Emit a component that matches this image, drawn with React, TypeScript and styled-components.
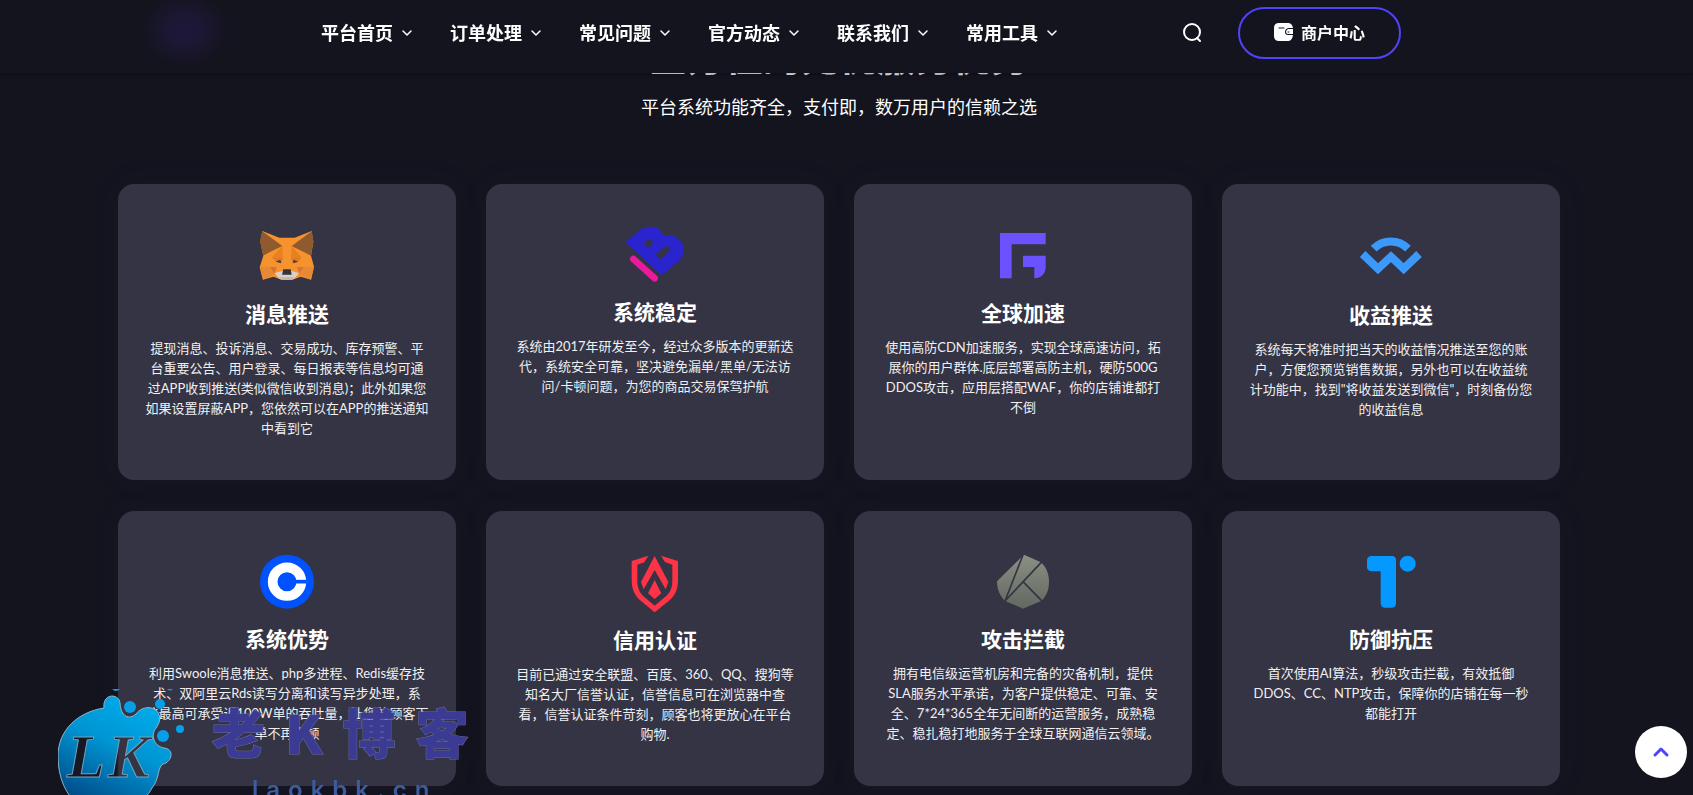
import React from "react";
import styled, { createGlobalStyle } from "styled-components";

const GlobalStyle = createGlobalStyle`
  * { box-sizing: border-box; }
  html { background: #14141f; }
  body {
    margin: 0;
    background: #14141f;
    color: #fff;
    font-family: Lato, "Noto Sans CJK SC", sans-serif;
    overflow: hidden;
  }
  h2, h3, p { margin: 0; }
`;

const Page = styled.div`
  height: 100vh;
  overflow: hidden;
`;

const Header = styled.header`
  position: fixed;
  inset: 0 0 auto 0;
  z-index: 10;
  padding: 0 15px 0 0;
  background: #14141f;
  box-shadow: 0 2px 4px rgba(0, 0, 0, 0.35);
`;

const HeaderInner = styled.div`
  display: flex;
  align-items: center;
  max-width: 1442px;
  min-height: 73px;
  margin: 0 auto;
  padding-bottom: 8px;
`;

const Logo = styled.a`
  flex: none;
  width: 134px;
  height: 65px;
  background: radial-gradient(ellipse 42px 36px at 50% 46%, #1e173c 0%, #1c1734 40%, #14141f 100%);
`;

const Nav = styled.nav`
  display: flex;
  gap: 37px;
  margin-left: 69px;
`;

const NavLink = styled.a`
  display: flex;
  align-items: center;
  gap: 8px;
  color: #fff;
  font-size: 18px;
  line-height: 28px;
  font-weight: 700;
  text-decoration: none;
  white-space: nowrap;
`;

const Actions = styled.div`
  display: flex;
  align-items: center;
  gap: 36px;
  margin: 0 159px 0 auto;
`;

const SearchButton = styled.button`
  display: flex;
  padding: 0;
  border: 0;
  background: none;
  color: #fff;
  cursor: pointer;
`;

const MerchantButton = styled.button`
  display: flex;
  align-items: center;
  gap: 8px;
  padding: 12px 34px;
  border: 2px solid #5142fc;
  border-radius: 26px;
  background: none;
  color: #fff;
  font: inherit;
  font-size: 16px;
  line-height: 24px;
  font-weight: 700;
  cursor: pointer;
`;

const Section = styled.main`
  padding: 28px 15px 0 0;
`;

const SectionInner = styled.div`
  max-width: 1442px;
  margin: 0 auto;
`;

const SectionTitle = styled.h2`
  font-size: 38px;
  line-height: 56px;
  font-weight: 700;
  text-align: center;
`;

const SectionLead = styled.p`
  margin-top: 9px;
  font-size: 18px;
  line-height: 28px;
  text-align: center;
`;

const Cards = styled.div`
  display: grid;
  grid-template-columns: repeat(4, 1fr);
  gap: 31px 30px;
  margin-top: 63px;
`;

const Card = styled.article`
  display: flex;
  flex-direction: column;
  align-items: center;
  padding: 43px 16px 42px;
  border-radius: 16px;
  background: #343444;
  box-shadow: 0 0 24px rgba(40, 40, 70, 0.2);
  text-align: center;
`;

const CardIcon = styled.svg`
  flex: none;
  width: 64px;
  overflow: visible;
`;

const CardTitle = styled.h3`
  margin-top: 15px;
  font-size: 21px;
  line-height: 32px;
  font-weight: 700;
`;

const CardText = styled.p`
  margin-top: 8px;
  color: #f0f0f2;
  font-size: 13px;
  line-height: 20px;
  white-space: pre-line;
`;

const TopButton = styled.button`
  position: fixed;
  right: 6px;
  bottom: 17px;
  z-index: 12;
  display: flex;
  align-items: center;
  justify-content: center;
  width: 52px;
  height: 52px;
  padding: 0;
  border: 0;
  border-radius: 50%;
  background: #fff;
  cursor: pointer;
`;

const Watermark = styled.div`
  position: fixed;
  left: 58px;
  bottom: 0;
  z-index: 11;
  display: flex;
  height: 108px;
  overflow: hidden;
  pointer-events: none;
`;

const WatermarkLogo = styled.svg`
  flex: none;
  width: 134px;
  height: 108px;
`;

const WatermarkText = styled.div`
  display: flex;
  flex-direction: column;
  margin-left: 20px;
`;

const SiteName = styled.div`
  display: flex;
  gap: 20px;
  margin-top: 10px;
  color: #3b3b93;
  font-family: "Noto Sans CJK SC", sans-serif;
  font-size: 53px;
  line-height: 68px;
  font-weight: 900;
  -webkit-text-stroke: 1px #6a6aa8;
  paint-order: stroke fill;
`;

const SiteAddress = styled.div`
  display: flex;
  gap: 8px;
  margin: 10px 0 0 40px;
  color: #3e5c9e;
  font-family: Inter, sans-serif;
  font-size: 24px;
  line-height: 30px;
  font-weight: 600;
`;

const NAV_ITEMS = ["平台首页", "订单处理", "常见问题", "官方动态", "联系我们", "常用工具"];

interface Feature {
  title: string;
  text: string;
  height: number;
  viewBox: string;
  art: React.ReactNode;
}

const FEATURES: Feature[] = [
  {
    title: "消息推送",
    text: "提现消息、投诉消息、交易成功、库存预警、平\n台重要公告、用户登录、每日报表等信息均可通\n过APP收到推送(类似微信收到消息)；此外如果您\n如果设置屏蔽APP，您依然可以在APP的推送通知\n中看到它",
    height: 56,
    viewBox: "435 171 192 168",
    art: (
      <>
        <path fill="#f6932f" d="M457 183 508 203H554L605 183 610 215 603 257 612 290 603 329 572 320 547 329H515L490 320 459 329 449 292 460 257 451 215Z" />
        <path fill="#8f5b2e" d="M457 184 517 228 486 243 459 257 450 213ZM605 184 545 228 575 243 603 257 610 213Z" />
        <path fill="#e9811c" d="M517 228 519 265 486 262ZM545 228 543 265 575 262Z" />
        <path fill="#de7a2a" d="M486 262 519 265 512 280 496 272ZM575 262 543 265 550 280 566 272Z" />
        <path fill="#e88a35" d="M449 290H484L495 312 459 329ZM612 290H577L566 312 603 329Z" />
        <path fill="#d27536" d="M480 291H500L494 311ZM581 291H561L567 311Z" />
        <path fill="#4a4038" d="M497 275 511 269 514 280ZM565 275 551 269 548 280Z" />
        <path fill="#dccfc7" d="M494 309 517 303H545L567 309 553 326 545 329H516L508 326Z" />
        <path fill="#c3b2a8" d="M508 322H553L545 329H516Z" />
        <path fill="#33353b" d="M520 298H542L545 314H516Z" />
      </>
    ),
  },
  {
    title: "系统稳定",
    text: "系统由2017年研发至今，经过众多版本的更新迭\n代，系统安全可靠，坚决避免漏单/黑单/无法访\n问/卡顿问题，为您的商品交易保驾护航",
    height: 54,
    viewBox: "429 171 192 162",
    art: (
      <>
        <path
          fill="#2a24cf"
          fillRule="evenodd"
          d="M437 217 475 184C497 164 541 164 549 196 586 190 612 213 611 242 610 257 604 266 596 273L545 316ZM491 221 504 234 515 224C524 214 511 202 501 211ZM527 254 541 268 565 247C577 235 564 222 552 232Z"
        />
        <path stroke="#ea1a9c" strokeWidth="20" strokeLinecap="round" d="M460 267 524 325" />
      </>
    ),
  },
  {
    title: "全球加速",
    text: "使用高防CDN加速服务，实现全球高速访问，拓\n展你的用户群体.底层部署高防主机，硬防500G\nDDOS攻击，应用层搭配WAF，你的店铺谁都打\n不倒",
    height: 55,
    viewBox: "423 171 192 165",
    art: <path fill="#6a52ff" d="M450 189H587V223H485V325H450ZM519 257H587V292C586 313 573 324 553 325V291H519Z" />,
  },
  {
    title: "收益推送",
    text: "系统每天将准时把当天的收益情况推送至您的账\n户，方便您预览销售数据，另外也可以在收益统\n计功能中，找到\"将收益发送到微信\"，时刻备份您\n的收益信息",
    height: 57,
    viewBox: "447 171 192 171",
    art: (
      <g fill="none" stroke="#3b99fc" strokeWidth="24">
        <path d="M491 236A72 72 0 0 1 594 236" />
        <path d="M458 252 504 296 543 260 581 296 627 252" />
      </g>
    ),
  },
  {
    title: "系统优势",
    text: "利用Swoole消息推送、php多进程、Redis缓存技\n术、双阿里云Rds读写分离和读写异步处理，系\n统最高可承受近100W单的吞吐量，让您的顾客下\n单不再卡顿",
    height: 54,
    viewBox: "645 162 192 162",
    art: (
      <>
        <circle cx="741" cy="245" r="81" fill="#0052ff" />
        <circle cx="741" cy="245" r="43" fill="none" stroke="#fff" strokeWidth="29" />
        <path stroke="#0052ff" strokeWidth="11" d="M760 245H800" />
      </>
    ),
  },
  {
    title: "信用认证",
    text: "目前已通过安全联盟、百度、360、QQ、搜狗等\n知名大厂信誉认证，信誉信息可在浏览器中查\n看，信誉认证条件苛刻，顾客也将更放心在平台\n购物.",
    height: 55,
    viewBox: "429 162 192 165",
    art: (
      <path
        fill="#ff3347"
        d="M505 167 455 183V243C456 276 470 292 484 304L524 337 565 304C580 292 593 276 594 243V183L543 167 555 186 577 194V243C577 268 567 281 554 292L524 317 494 292C482 281 472 268 472 243V194L493 187ZM524 168 565 246 557 268 524 210 491 268 483 246ZM524 240 544 280 524 297 504 280Z"
      />
    ),
  },
  {
    title: "攻击拦截",
    text: "拥有电信级运营机房和完备的灾备机制，提供\nSLA服务水平承诺，为客户提供稳定、可靠、安\n全、7*24*365全年无间断的运营服务，成熟稳\n定、稳扎稳打地服务于全球互联网通信云领域。",
    height: 54,
    viewBox: "423 162 192 162",
    art: (
      <>
        <linearGradient id="stone" x1="0" y1="0" x2="0" y2="1">
          <stop offset="0" stopColor="#8b9084" />
          <stop offset="1" stopColor="#626860" />
        </linearGradient>
        <path fill="url(#stone)" d="M522 164 571 186C588 199 597 222 597 245 597 268 590 286 575 302L519 326 464 302C450 288 441 268 441 244Z" />
        <path fill="none" stroke="#343444" strokeWidth="5" d="M519 165 465 303 576 185M519 245 577 304" />
      </>
    ),
  },
  {
    title: "防御抗压",
    text: "首次使用AI算法，秒级攻击拦截，有效抵御\nDDOS、CC、NTP攻击，保障你的店铺在每一秒\n都能打开",
    height: 54,
    viewBox: "447 162 192 162",
    art: (
      <g fill="#0599ff">
        <rect x="471" y="168" width="87" height="46" rx="13" />
        <rect x="512" y="168" width="46" height="155" rx="13" />
        <circle cx="593" cy="191" r="24" />
      </g>
    ),
  },
];

function FeatureCard({ feature }: { feature: Feature }) {
  return (
    <Card>
      <CardIcon viewBox={feature.viewBox} height={feature.height} aria-hidden="true">
        {feature.art}
      </CardIcon>
      <CardTitle>{feature.title}</CardTitle>
      <CardText>{feature.text}</CardText>
    </Card>
  );
}

function BlobLogo() {
  return (
    <WatermarkLogo viewBox="58 687 134 108" aria-hidden="true">
      <defs>
        <linearGradient id="blob" x1="0.75" y1="0" x2="0.25" y2="1">
          <stop offset="0" stopColor="#00aeec" />
          <stop offset="0.45" stopColor="#0095d3" />
          <stop offset="1" stopColor="#004a85" />
        </linearGradient>
        <linearGradient id="cut" gradientUnits="userSpaceOnUse" x1="117" y1="0" x2="119" y2="0">
          <stop offset="0" stopColor="#181824" />
          <stop offset="1" stopColor="#343444" />
        </linearGradient>
      </defs>
      <path
        fill="url(#blob)"
        stroke="#8fb4c8"
        strokeWidth="1"
        d="M104 708C102 693 119 693 120 703C121 717 129 720 136 714C141 707 150 706 156 710C163 718 159 724 154 731C151 740 157 747 164 748C175 749 172 762 163 764C157 768 160 778 152 788C148 796 142 801 130 806H80C66 796 58 778 58 756C58 730 78 712 104 708Z"
      />
      <g fill="#089fe9">
        <circle cx="130" cy="707" r="6" />
        <circle cx="160" cy="704" r="5" />
        <circle cx="163" cy="736" r="6" />
        <circle cx="180" cy="729" r="4" />
        <path d="M112 689H120Q116 693 112 689ZM167 689H173Q170 692 167 689Z" />
      </g>
      <g fill="url(#cut)" stroke="#6fa3c0" strokeWidth="1" fontFamily="Liberation Serif" fontSize="62" fontStyle="italic" fontWeight="700">
        <text x="67" y="777">L</text>
        <text x="108" y="777">K</text>
      </g>
    </WatermarkLogo>
  );
}

export default function App() {
  return (
    <Page>
      <GlobalStyle />
      <Header>
        <HeaderInner>
          <Logo href="#" aria-label="首页" />
          <Nav>
            {NAV_ITEMS.map((item) => (
              <NavLink href="#" key={item}>
                {item}
                <svg width="12" height="8" viewBox="0 0 12 8" fill="none" stroke="#fff" strokeWidth="1.5" strokeLinecap="round" strokeLinejoin="round">
                  <path d="M2 2 6 6 10 2" />
                </svg>
              </NavLink>
            ))}
          </Nav>
          <Actions>
            <SearchButton aria-label="搜索">
              <svg width="20" height="20" viewBox="0 0 20 20" fill="none" stroke="currentColor" strokeWidth="2" strokeLinecap="round">
                <circle cx="10" cy="9" r="8" />
                <path d="M15 15 18 18" />
              </svg>
            </SearchButton>
            <MerchantButton>
              <svg width="19" height="20" viewBox="0 0 19 20">
                <path fill="#fff" d="M5 0H14Q18 0 19 5H14Q11 6 11 9T14 12H19Q18 18 14 18H5Q0 18 0 13V5Q0 0 5 0Z" />
                <path fill="#fff" d="M14 6H19V11H14Q12 11 12 9T14 6Z" />
                <path stroke="#14141f" strokeWidth="1" strokeLinecap="round" d="M5 5H10M14 9H15" />
              </svg>
              商户中心
            </MerchantButton>
          </Actions>
        </HeaderInner>
      </Header>
      <Section>
        <SectionInner>
          <SectionTitle>全方位的无忧服务优势</SectionTitle>
          <SectionLead>平台系统功能齐全，支付即，数万用户的信赖之选</SectionLead>
          <Cards>
            {FEATURES.map((feature) => (
              <FeatureCard feature={feature} key={feature.title} />
            ))}
          </Cards>
        </SectionInner>
      </Section>
      <Watermark>
        <BlobLogo />
        <WatermarkText>
          <SiteName>
            {[..."老K博客"].map((char, i) => (
              <span key={i}>{char}</span>
            ))}
          </SiteName>
          <SiteAddress>
            {[..."laokbk.cn"].map((char, i) => (
              <span key={i}>{char}</span>
            ))}
          </SiteAddress>
        </WatermarkText>
      </Watermark>
      <TopButton aria-label="返回顶部">
        <svg width="20" height="14" viewBox="0 0 20 14" fill="none" stroke="#5142fc" strokeWidth="3" strokeLinecap="round" strokeLinejoin="round">
          <path d="M4 10 10 4 16 10" />
        </svg>
      </TopButton>
    </Page>
  );
}
